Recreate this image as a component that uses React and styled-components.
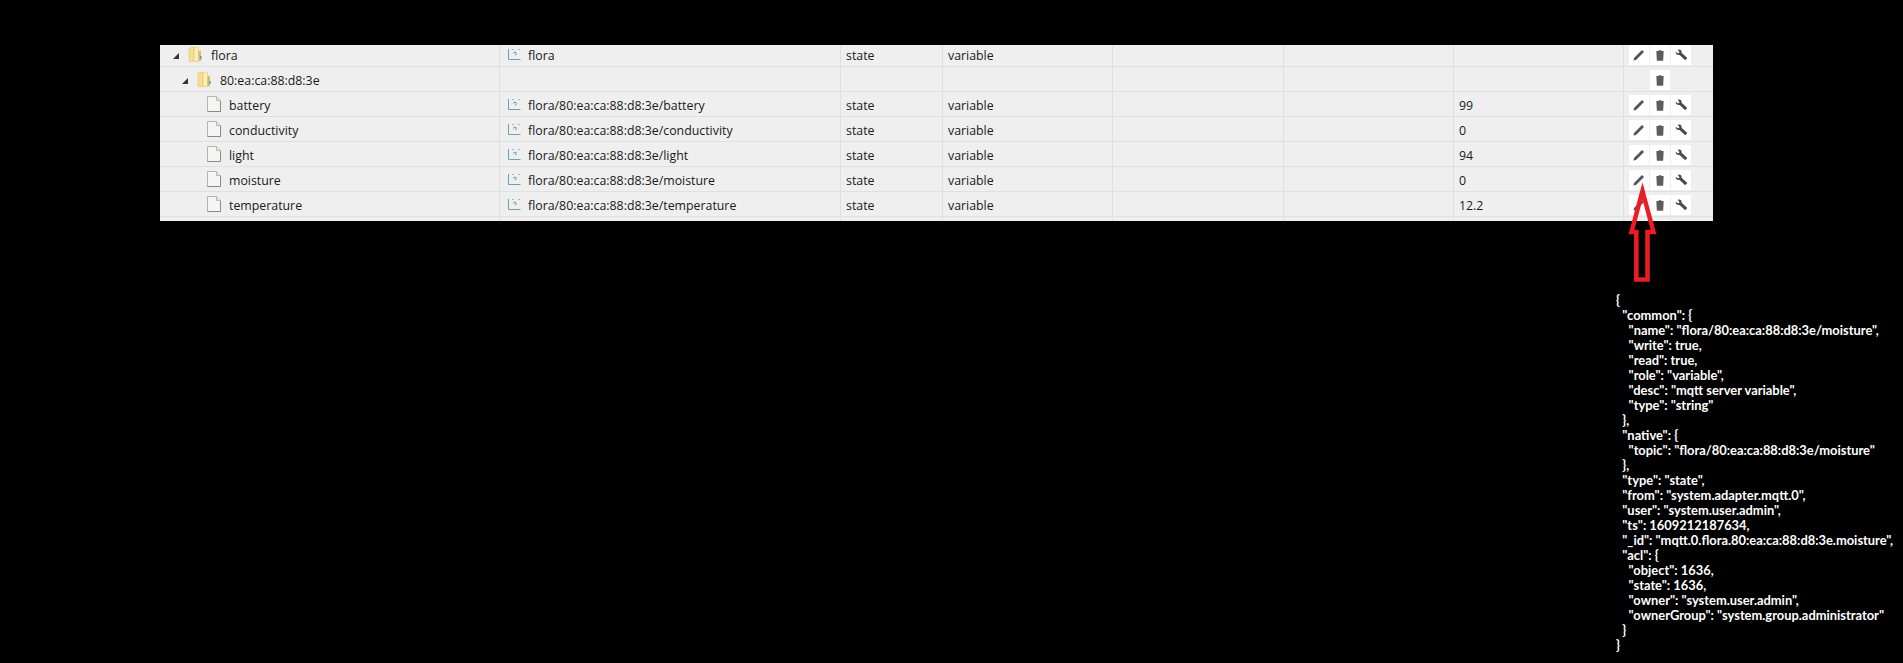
import styled, { createGlobalStyle } from 'styled-components';

const rows = [
  { kind: 'folder', depth: 0, name: 'flora', hasIcon: true, path: 'flora', type: 'state', role: 'variable', value: '' },
  { kind: 'folder', depth: 1, name: '80:ea:ca:88:d8:3e', hasIcon: false, path: '', type: '', role: '', value: '', onlyDelete: true },
  { kind: 'file', depth: 2, name: 'battery', hasIcon: true, path: 'flora/80:ea:ca:88:d8:3e/battery', type: 'state', role: 'variable', value: '99' },
  { kind: 'file', depth: 2, name: 'conductivity', hasIcon: true, path: 'flora/80:ea:ca:88:d8:3e/conductivity', type: 'state', role: 'variable', value: '0' },
  { kind: 'file', depth: 2, name: 'light', hasIcon: true, path: 'flora/80:ea:ca:88:d8:3e/light', type: 'state', role: 'variable', value: '94' },
  { kind: 'file', depth: 2, name: 'moisture', hasIcon: true, path: 'flora/80:ea:ca:88:d8:3e/moisture', type: 'state', role: 'variable', value: '0' },
  { kind: 'file', depth: 2, name: 'temperature', hasIcon: true, path: 'flora/80:ea:ca:88:d8:3e/temperature', type: 'state', role: 'variable', value: '12.2' },
  { kind: 'none', depth: 0, name: '', hasIcon: false, path: '', type: '', role: '', value: '', onlyDelete: true },
];

const json = `{
  "common": {
    "name": "flora/80:ea:ca:88:d8:3e/moisture",
    "write": true,
    "read": true,
    "role": "variable",
    "desc": "mqtt server variable",
    "type": "string"
  },
  "native": {
    "topic": "flora/80:ea:ca:88:d8:3e/moisture"
  },
  "type": "state",
  "from": "system.adapter.mqtt.0",
  "user": "system.user.admin",
  "ts": 1609212187634,
  "_id": "mqtt.0.flora.80:ea:ca:88:d8:3e.moisture",
  "acl": {
    "object": 1636,
    "state": 1636,
    "owner": "system.user.admin",
    "ownerGroup": "system.group.administrator"
  }
}`;

const FolderIcon = () => (
  <svg width="15" height="17" viewBox="0 0 15 17">
    <path d="M1 2.5 L5 1 L6 2 L6 15 L2 16 L1 15 Z" fill="#f6df93" stroke="#e3c468" strokeWidth="0.6" />
    <path d="M6 1.5 L9.5 1 L10.5 2 L10.5 15.5 L6 15.5 Z" fill="#fbeeb8" stroke="#e3c468" strokeWidth="0.6" />
    <rect x="10.5" y="5" width="2.5" height="10" fill="#d9bb62" />
    <rect x="12" y="10" width="1.6" height="3" fill="#4aa3d8" />
  </svg>
);

const FileIcon = () => (
  <svg width="14" height="16" viewBox="0 0 14 16">
    <path d="M0.5 0.5 H9.5 L13.5 4.5 V15.5 H0.5 Z" fill="#f5f5f3" stroke="#b4b4b4" />
    <path d="M9.5 0.5 V4.5 H13.5" fill="#e4e4e4" stroke="#b8b8b8" />
    <path d="M0.5 15.5 H13.5 V5" fill="none" stroke="#8a8a8a" />
  </svg>
);

const StateIcon = () => (
  <svg width="13" height="13" viewBox="0 0 13 13" fill="none" stroke="#6f9fb3" strokeWidth="1">
    <path d="M0.5 1 V11.5 H12.5" />
    <path d="M4 1.5 H5.5 M10.5 1.5 H12" strokeWidth="0.8" />
    <path d="M5.5 5.5 a1.4 1.4 0 1 1 1.5 1.5" stroke="#5b8494" strokeWidth="0.9" />
  </svg>
);

const PenIcon = () => (
  <svg width="12" height="12" viewBox="0 0 12 12">
    <path d="M0.5 11.5 L1 9 L9 1 L11 3 L3 11 Z" fill="#555" />
  </svg>
);

const TrashIcon = () => (
  <svg width="8" height="11" viewBox="0 0 8 11">
    <path d="M0.4 1 H2.4 L2.8 0.2 H5.2 L5.6 1 H7.6 V2.2 L7.2 10.2 Q7.2 10.8 6.4 10.8 H1.6 Q0.8 10.8 0.8 10.2 L0.4 2.2 Z" fill="#5c5c5c" />
  </svg>
);

const WrenchIcon = () => (
  <svg width="13" height="12" viewBox="0 0 13 12">
    <path d="M0.8 2.8 L3 4.6 L4.6 3.2 L2.8 0.9 C4.8 0 7 1.4 6.6 3.7 L12.3 8.9 L10.2 11.2 L4.6 5.9 C2.3 6.4 0.2 4.9 0.8 2.8 Z" fill="#4a4a4a" />
  </svg>
);

const Arrow = () => (
  <ArrowSvg width="34" height="104" viewBox="0 0 34 104">
    <path
      d="M16.5 11 L27.5 52 H21.5 V99.5 H10.3 V52 H5.5 Z"
      fill="none"
      stroke="#ed1c24"
      strokeWidth="4.5"
      strokeMiterlimit="10"
    />
  </ArrowSvg>
);

const App = () => {
  return (
    <Page>
      <GlobalStyle />
      <TableWrap>
        <Window>
          <Table>
            {rows.map((row, i) => (
              <Row key={i}>
                <NameCell $kind={row.kind} $depth={row.depth}>
                  {row.kind === 'folder' && <Toggle />}
                  {row.kind === 'folder' && <FolderIcon />}
                  {row.kind === 'file' && <FileIcon />}
                  <NameText>{row.name}</NameText>
                </NameCell>
                <PathCell>
                  {row.hasIcon && <StateIcon />}
                  <span>{row.path}</span>
                </PathCell>
                <Cell>{row.type}</Cell>
                <Cell>{row.role}</Cell>
                <Cell />
                <Cell />
                <Cell>{row.value}</Cell>
                <Actions>
                  <ActionButton $hidden={row.onlyDelete}><PenIcon /></ActionButton>
                  <ActionButton><TrashIcon /></ActionButton>
                  <ActionButton $hidden={row.onlyDelete}><WrenchIcon /></ActionButton>
                </Actions>
              </Row>
            ))}
          </Table>
        </Window>
        <Arrow />
      </TableWrap>
      <JsonDump>{json}</JsonDump>
    </Page>
  );
};

const GlobalStyle = createGlobalStyle`
  html, body {
    margin: 0;
    padding: 0;
    background: #000;
  }
`;

const Page = styled.div`
  height: 663px;
  overflow: hidden;
  background: #000;
  padding: 45px 0 0 160px;
  box-sizing: border-box;
`;

const TableWrap = styled.div`
  position: relative;
  width: 1553px;
`;

const Window = styled.div`
  height: 176px;
  overflow: hidden;
  background: #efefef;
`;

const Table = styled.div`
  margin-top: -3px;
  font-family: "Open Sans", sans-serif;
  font-size: 12.35px;
  color: #1a1a1a;
`;

const Row = styled.div`
  display: grid;
  grid-template-columns: 340px 341px 102px 170px 171px 170px 170px 89px;
  height: 25px;
  box-sizing: border-box;
  border-bottom: 1px solid #e0e0e0;
`;

const Cell = styled.div`
  display: flex;
  align-items: center;
  padding-left: 5px;
  padding-top: 3px;
  border-right: 1px solid #e0e0e0;
  white-space: nowrap;
  overflow: hidden;
  box-sizing: border-box;
  svg {
    margin-top: -3px;
    flex: none;
  }
`;

const NameCell = styled(Cell)`
  padding-left: ${(p) => (p.$kind === 'file' ? 47 : 13 + p.$depth * 9)}px;
`;

const Toggle = styled.span`
  width: 0;
  height: 0;
  margin-right: 9px;
  border-style: solid;
  border-width: 0 0 6px 6px;
  border-color: transparent transparent #333 transparent;
`;

const NameText = styled.span`
  margin-left: 8px;
`;

const PathCell = styled(Cell)`
  padding-left: 8px;
  gap: 7px;
`;

const Actions = styled.div`
  display: flex;
  gap: 1px;
  padding: 3px 0 1px 5px;
`;

const ActionButton = styled.div`
  width: 20px;
  height: 20px;
  display: flex;
  align-items: center;
  justify-content: center;
  background: ${(p) => (p.$hidden ? 'transparent' : '#fff')};
  svg {
    visibility: ${(p) => (p.$hidden ? 'hidden' : 'visible')};
  }
`;

const ArrowSvg = styled.svg`
  position: absolute;
  left: 1466px;
  top: 135px;
`;

const JsonDump = styled.pre`
  margin: 72px 0 0 1456px;
  width: 290px;
  font-family: Lato, sans-serif;
  font-weight: 700;
  font-size: 12.9px;
  line-height: 15px;
  color: #fff;
  white-space: pre;
`;

export default App;
